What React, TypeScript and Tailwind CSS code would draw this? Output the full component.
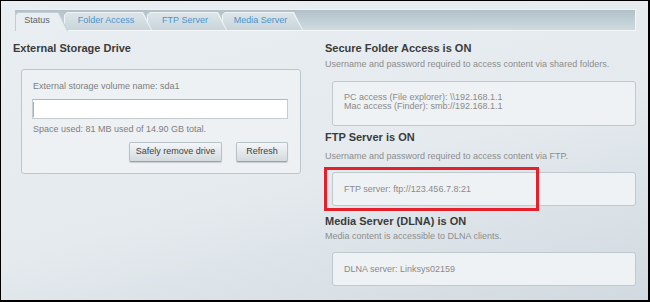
const tabs = [
  { label: 'Status', active: true, cls: 'w-[53px] z-40', pad: 'pl-0' },
  { label: 'Folder Access', active: false, cls: 'w-[88px] -ml-[4px] z-30', pad: 'pl-[5px]' },
  { label: 'FTP Server', active: false, cls: 'w-[80px] -ml-[5px] z-20', pad: 'pl-[5px]' },
  { label: 'Media Server', active: false, cls: 'w-[81px] -ml-[5px] z-10', pad: 'pl-[5px]' },
];

const Tab = ({ label, active, cls, pad }: (typeof tabs)[number]) => (
  <div className={`relative ${active ? 'h-[19px] -mb-px' : 'h-[18px]'} ${cls}`}>
    <div
      className={`absolute inset-0 [clip-path:polygon(0_3px,3px_0,calc(100%-9px)_0,100%_100%,0_100%)] ${
        active ? 'bg-[#c3ced4]' : 'bg-[#eef3f5]'
      }`}
    />
    <div
      className={`absolute inset-[1px_1px_0_1px] [clip-path:polygon(0_2px,2px_0,calc(100%-9px)_0,100%_100%,0_100%)] ${
        active ? 'bg-[#e8eef1]' : 'bg-[linear-gradient(#dce5e9,#c9d5db)]'
      }`}
    />
    <div className={`relative flex justify-center pt-[3px] pr-[9px] ${pad}`}>
      <span className={`text-[9px] leading-[11px] ${active ? 'text-[#5f6568]' : 'text-[#4b93cc]'}`}>{label}</span>
    </div>
  </div>
);

const Section = ({ title, note, children, top, noteTop }: { title: string; note: string; children: React.ReactNode; top: string; noteTop: string }) => (
  <div className={top}>
    <div className="text-[11px] leading-[13px] font-bold text-[#3b3b3b]">{title}</div>
    <div className={`text-[9px] leading-[11px] text-[#8d8d8d] ${noteTop}`}>{note}</div>
    {children}
  </div>
);

const InfoBox = ({ lines, h, mt, children }: { lines: string[]; h: string; mt: string; children?: React.ReactNode }) => (
  <div className={`relative ml-[7px] w-[304px] ${h} ${mt}`}>
    <div className="h-full border border-[#bfc9ce] rounded-[3px] bg-[#eef2f4] pt-[11px] pl-[11px]">
      {lines.map((l) => (
        <div key={l} className={`text-[9px] text-[#8a8a8a] ${lines.length > 1 ? 'leading-[9px]' : 'leading-[11px]'}`}>
          {l}
        </div>
      ))}
    </div>
    {children}
  </div>
);

export default function App() {
  return (
    <div className="w-[650px] h-[302px] border-t border-l border-r-2 border-b-2 border-black font-['Liberation_Sans',Arial,sans-serif] bg-[linear-gradient(165deg,#e9eef2_0%,#e4eaee_55%,#d1dae0_100%)] overflow-hidden">
      <div className="h-[8px]" />
      <div className="ml-[14px] w-[621px] h-[22px] border-t border-[#eef2f4] border-r border-b border-r-[#f4f7f8] border-b-[#f4f7f8] bg-[linear-gradient(#b0c1c7,#cfdce2)] flex items-end">
        {tabs.map((t) => (
          <Tab key={t.label} {...t} />
        ))}
      </div>

      <div className="flex pt-[11px] pl-[12px]">
        <div className="w-[288px]">
          <div className="text-[11px] leading-[13px] font-bold text-[#3b3b3b]">External Storage Drive</div>
          <div className="mt-[14px] ml-[8px] w-[280px] h-[105px] border border-[#bcc7cd] rounded-[3px] bg-[#edf1f4] pt-[11px] pl-[10px]">
            <div className="text-[9px] leading-[11px] text-[#7e7e7e] pl-px">External storage volume name: sda1</div>
            <div className="mt-[7px] w-[256px] h-[20px] bg-white border border-[#c6cdd1] border-t-[#aeb8bd] flex items-center">
              <span className="block w-px h-[15px] bg-[#f2a33a]" />
            </div>
            <div className="mt-[5px] text-[9px] leading-[11px] text-[#7e7e7e] pl-px">Space used: 81 MB used of 14.90 GB total.</div>
            <div className="mt-[7px] w-[256px] flex justify-end gap-[14px]">
              <button
                type="button"
                className="w-[93px] h-[20px] text-[9px] text-[#3f3f3f] border border-[#b7c1c6] border-b-[#98a4aa] rounded-[2px] bg-[linear-gradient(#f3f6f7,#d3dbdf)] shadow-[0_1px_1px_rgba(0,0,0,0.15)]"
              >
                Safely remove drive
              </button>
              <button
                type="button"
                className="w-[52px] h-[20px] text-[9px] text-[#3f3f3f] border border-[#b7c1c6] border-b-[#98a4aa] rounded-[2px] bg-[linear-gradient(#f3f6f7,#d3dbdf)] shadow-[0_1px_1px_rgba(0,0,0,0.15)]"
              >
                Refresh
              </button>
            </div>
          </div>
        </div>

        <div className="ml-[24px] w-[311px]">
          <Section title="Secure Folder Access is ON" note="Username and password required to access content via shared folders." top="" noteTop="mt-[4px]">
            <InfoBox
              lines={['PC access (File explorer): \\\\192.168.1.1', 'Mac access (Finder): smb://192.168.1.1']}
              h="h-[45px]"
              mt="mt-[11px]"
            />
          </Section>
          <Section title="FTP Server is ON" note="Username and password required to access content via FTP." top="mt-[5px]" noteTop="mt-[7px]">
            <InfoBox lines={['FTP server: ftp://123.456.7.8:21']} h="h-[34px]" mt="mt-[10px]">
              <div className="absolute left-[-8px] top-[-5px] w-[215px] h-[44px] border-[3px] border-[#e4202a]" />
            </InfoBox>
          </Section>
          <Section title="Media Server (DLNA) is ON" note="Media content is accessible to DLNA clients." top="mt-[9px]" noteTop="mt-[3px]">
            <InfoBox lines={['DLNA server: Linksys02159']} h="h-[34px]" mt="mt-[10px]" />
          </Section>
        </div>
      </div>
    </div>
  );
}
